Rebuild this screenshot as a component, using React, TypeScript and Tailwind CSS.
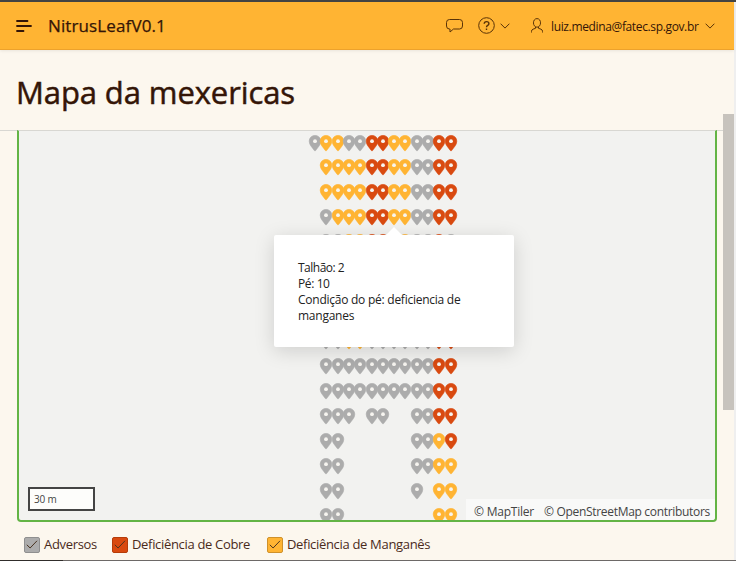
import React from "react";

const PIN_COLORS: Record<string, string> = {
  g: "#acacac",
  y: "#ffb433",
  r: "#d94a10",
};

// One string per row of trees: g = other, y = manganese, r = copper, . = no tree.
const ROWS = [
  "gyyggrryyggrr",
  ".yyyyrryyggrr",
  ".yyyyrryyggrr",
  ".gyyyrryyggrr",
  ".ggyyrryyggrg",
  ".ggyyrryyggrr",
  ".ggyyrryyggrr",
  ".ggyygggggggr",
  ".ggyyggggggrr",
  ".ggggggggggrr",
  ".ggggggggggrr",
  ".ggg.gg..ggrr",
  ".gg......ggyr",
  ".gg......ggyy",
  ".gg......g.yy",
  ".gg........yy",
];

function Pin({ kind, col, row }: { kind: string; col: number; row: number }) {
  return (
    <svg
      className="absolute h-[17px] w-3 overflow-visible"
      style={{ left: 290 + col * 11.3, top: 3.5 + row * 24.87 }}
      viewBox="0 0 12 17"
    >
      <path
        d="M6 .4C2.600.4.200 2.900.200 6.200c0 3.800 3.200 6.300 5.200 9.400q.6.8 1.200 0c2-3.100 5.200-5.600 5.200-9.400C11.800 2.900 9.400.4 6 .4Z"
        fill={PIN_COLORS[kind]}
        stroke={PIN_COLORS[kind]}
        strokeWidth=".6"
      />
      <circle cx="6" cy="6.200" r="1.900" fill="#f7f5f0" />
    </svg>
  );
}

function Chevron() {
  return (
    <svg className="h-[6px] w-[10px]" viewBox="0 0 10 6" fill="none" stroke="#5a3307">
      <path d="M.6.700 5 5.100 9.400.700" />
    </svg>
  );
}

function Header() {
  return (
    <header className="flex h-12 shrink-0 items-center border-b border-[#eda22c] bg-[#ffb433] text-[#341507] shadow-[0_1px_3px_rgba(0,0,0,0.08)]">
      <svg className="ml-4 h-3 w-4" viewBox="0 0 16 12" stroke="#341507" strokeWidth="1.800" strokeLinecap="round">
        <path d="M1 1h10.500M1 6h14M1 11h6.500" />
      </svg>
      <span className="ml-4 w-[398px] whitespace-nowrap pt-px text-[17px] tracking-[0.12px] [-webkit-text-stroke:0.25px_#341507]">NitrusLeafV0.1</span>
      <svg className="h-[15px] w-[17px]" viewBox="0 0 17 15" fill="none" stroke="#5a3307">
        <path d="M3.500 1.500h10q3 0 3 3v3.500q0 3-3 3H7.500L4 14v-3H3.500q-3 0-3-3V4.500q0-3 3-3Z" />
      </svg>
      <svg className="ml-[15px] h-[17px] w-[17px]" viewBox="0 0 17 17" fill="none" stroke="#5a3307">
        <circle cx="8.500" cy="8.500" r="7.800" />
        <path strokeWidth="1.400" d="M6.200 6.800c0-3 4.700-2.900 4.700-.1 0 1.800-2.400 1.600-2.400 3.500M8.500 11.600v1.400" />
      </svg>
      <span className="ml-[5px] flex"><Chevron /></span>
      <svg className="ml-[21px] h-[15px] w-[12px]" viewBox="0 0 12 15" fill="none" stroke="#5a3307">
        <path d="M6 .6C1.200.6 1.400 9.200 6 9.200S10.800.6 6 .6ZM.5 14.500v-1q0-1.800 1.500-2.300l2.500-.9V8.700M11.500 14.500v-1q0-1.800-1.500-2.300l-2.500-.9V8.700" />
      </svg>
      <span className="ml-[8px] w-[149px] whitespace-nowrap pt-0.5 text-[12px] tracking-[-0.36px]">luiz.medina@fatec.sp.gov.br</span>
      <span className="ml-[5px] flex"><Chevron /></span>
    </header>
  );
}

function Popup() {
  return (
    <div className="absolute left-[255px] top-[104px] h-[112px] w-60 rounded-[2px] bg-white px-6 py-[25px] text-[12px] leading-4 tracking-[-0.25px] text-[#222] shadow-[0_4px_20px_rgba(0,0,0,0.15)]">
      <div className="absolute -top-2 left-[112px] h-0 w-0 border-x-8 border-b-8 border-x-transparent border-b-white" />
      <p className="tracking-[-0.5px]">Talhão: 2</p>
      <p className="tracking-[-0.4px]">Pé: 10</p>
      <p>Condição do pé: deficiencia de manganes</p>
    </div>
  );
}

function TreeMap() {
  return (
    <div className="relative -mt-px ml-[17px] h-[392px] w-[700px] shrink-0 overflow-hidden rounded-b-[4px] border-x-2 border-b-2 border-t border-[#63b445] border-t-[#d8d7d2] bg-[#f2f2f0]">
      {ROWS.map((row, r) =>
        row.split("").map((kind, c) => (kind === "." ? null : <Pin key={`${r}-${c}`} kind={kind} col={c} row={r} />))
      )}
      <Popup />
      <div className="absolute bottom-[9px] left-[9px] flex h-6 w-[67px] items-center border-2 border-[#444] bg-[#fdfdfb] pl-1 text-[10px] tracking-[-0.2px] text-[#444]">
        30 m
      </div>
      <div className="absolute -bottom-0.5 -right-0.5 flex h-[23px] w-[251px] gap-[10px] whitespace-nowrap bg-white/50 pl-2 text-[12px] leading-[25px] text-[#444]">
        <span className="w-[60px] tracking-[-0.22px]">© MapTiler</span>
        <span className="tracking-[-0.31px]">© OpenStreetMap contributors</span>
      </div>
    </div>
  );
}

function LegendItem({ box, label, className }: { box: string; label: string; className: string }) {
  return (
    <label className={`flex shrink-0 items-center gap-1 whitespace-nowrap ${className}`}>
      <span className={`flex h-4 w-4 items-center justify-center rounded-[2px] border ${box}`}>
        <svg className="h-[9px] w-3" viewBox="0 0 12 9" fill="none" stroke="#4b3522">
          <path d="M.8 4.800 4.100 8 11 .8" />
        </svg>
      </span>
      <span>{label}</span>
    </label>
  );
}

export default function App() {
  return (
    <div className="relative flex h-[561px] w-[736px] flex-col overflow-hidden bg-[#efefef] font-['Open_Sans','Noto_Sans',sans-serif]">
      <div className="h-0.5 shrink-0 bg-[#444]" />
      <div className="flex h-[558px] w-[734px] shrink-0 flex-col bg-[#fcf7ee]">
        <Header />
        <div className="flex h-[81px] shrink-0 items-center border-b border-[#d8d7d2] pl-4 pt-1">
          <h1 className="whitespace-nowrap text-[31px] leading-10 tracking-[-0.1px] text-[#341507] [-webkit-text-stroke:0.5px_#341507]">Mapa da mexericas</h1>
        </div>
        <TreeMap />
        <div className="flex h-[38px] items-center pl-6 pt-[7px] text-[13px] tracking-[-0.32px] text-[#4a2a1b]">
          <LegendItem box="border-[#8f8f8f] bg-[#acacac]" label="Adversos" className="w-[88px]" />
          <LegendItem box="border-[#b63c09] bg-[#d94a10]" label="Deficiência de Cobre" className="w-[155px]" />
          <LegendItem box="border-[#cf912b] bg-[#ffb433]" label="Deficiência de Manganês" className="w-[165px]" />
        </div>
      </div>
      <div className="flex h-px shrink-0 bg-[#6d6967]">
        <div className="w-[63px] bg-[#302d2b]" />
      </div>
      <div className="absolute left-[723px] top-[114px] h-[296px] w-[11px] bg-[#c7c3bd]" />
    </div>
  );
}
